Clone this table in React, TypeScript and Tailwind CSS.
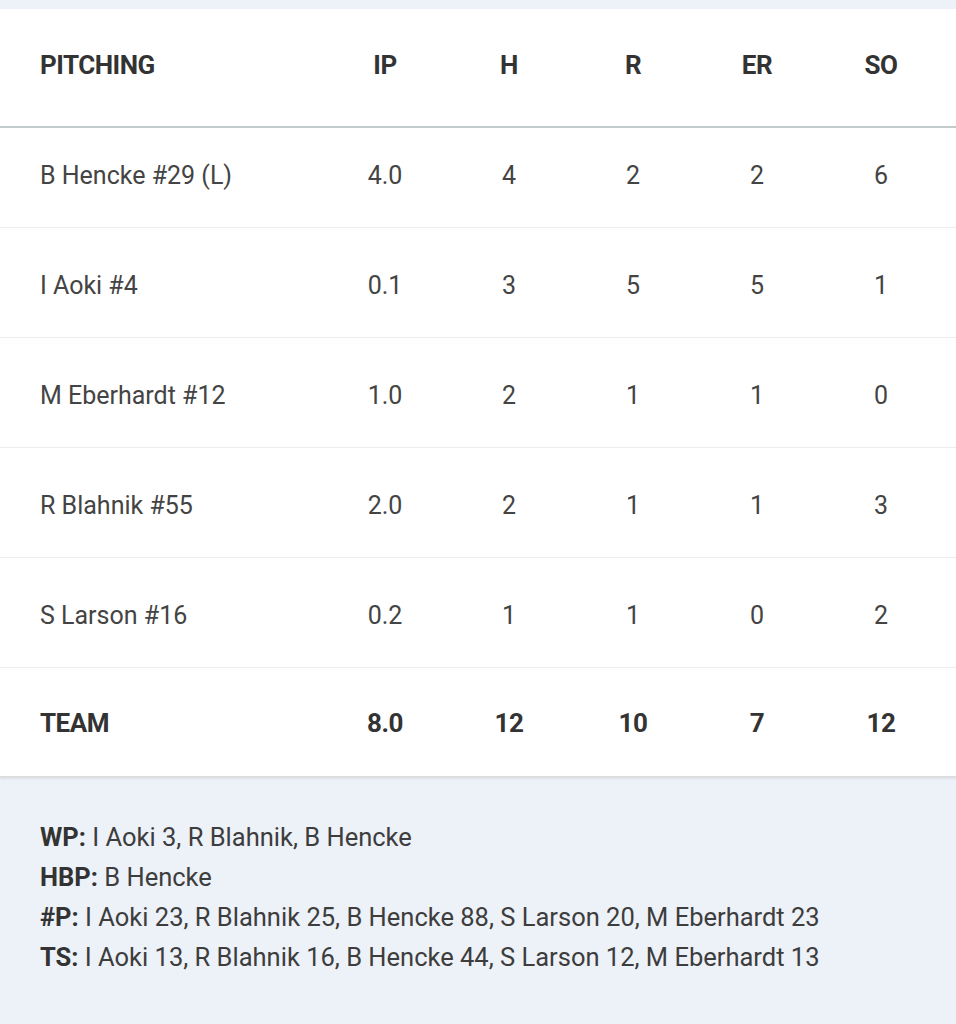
import React from "react";

const rows = [
  ["B Hencke #29 (L)", "4.0", "4", "2", "2", "6"],
  ["I Aoki #4", "0.1", "3", "5", "5", "1"],
  ["M Eberhardt #12", "1.0", "2", "1", "1", "0"],
  ["R Blahnik #55", "2.0", "2", "1", "1", "3"],
  ["S Larson #16", "0.2", "1", "1", "0", "2"],
];

const grid = "grid grid-cols-[283px_124px_124px_124px_124px_124px] pl-[40px] items-center";

export default function App() {
  return (
    <div className="w-[956px] min-h-[1024px] bg-[#edf1f8] pt-[9px] text-[#3a3a3a]" style={{ fontFamily: "Roboto, 'Noto Sans', sans-serif" }}>
      <div className="bg-white shadow-[0_2px_2px_rgba(0,0,0,0.08)]">
        <div className={`${grid} h-[119px] pb-[4px] border-b-2 border-[#c3cccc] font-bold text-[26px] tracking-[-0.5px] text-[#333]`}>
          <div>PITCHING</div>
          <div className="text-center">IP</div>
          <div className="text-center">H</div>
          <div className="text-center">R</div>
          <div className="text-center">ER</div>
          <div className="text-center">SO</div>
        </div>
        {rows.map((r, i) => (
          <div key={i} className={`${grid} ${i === 0 ? "h-[100px] pb-[4px]" : "h-[110px] pt-[6px]"} border-b border-[#ececec] text-[25px] text-[#444]`}>
            <div>{r[0]}</div>
            {r.slice(1).map((c, j) => (
              <div key={j} className="text-center">{c}</div>
            ))}
          </div>
        ))}
        <div className={`${grid} h-[109px] pt-[2px] font-bold text-[26px] tracking-[-0.5px] text-[#333] border-b border-[#dcdcdc]`}>
          <div>TEAM</div>
          <div className="text-center">8.0</div>
          <div className="text-center">12</div>
          <div className="text-center">10</div>
          <div className="text-center">7</div>
          <div className="text-center">12</div>
        </div>
      </div>
      <div className="pl-[40px] pt-[40px] text-[25.5px] leading-[40px] text-[#3d3d3d]">
        <div><span className="font-bold text-[#333]">WP:</span> I Aoki 3, R Blahnik, B Hencke</div>
        <div><span className="font-bold text-[#333]">HBP:</span> B Hencke</div>
        <div><span className="font-bold text-[#333]">#P:</span> I Aoki 23, R Blahnik 25, B Hencke 88, S Larson 20, M Eberhardt 23</div>
        <div><span className="font-bold text-[#333]">TS:</span> I Aoki 13, R Blahnik 16, B Hencke 44, S Larson 12, M Eberhardt 13</div>
      </div>
    </div>
  );
}
